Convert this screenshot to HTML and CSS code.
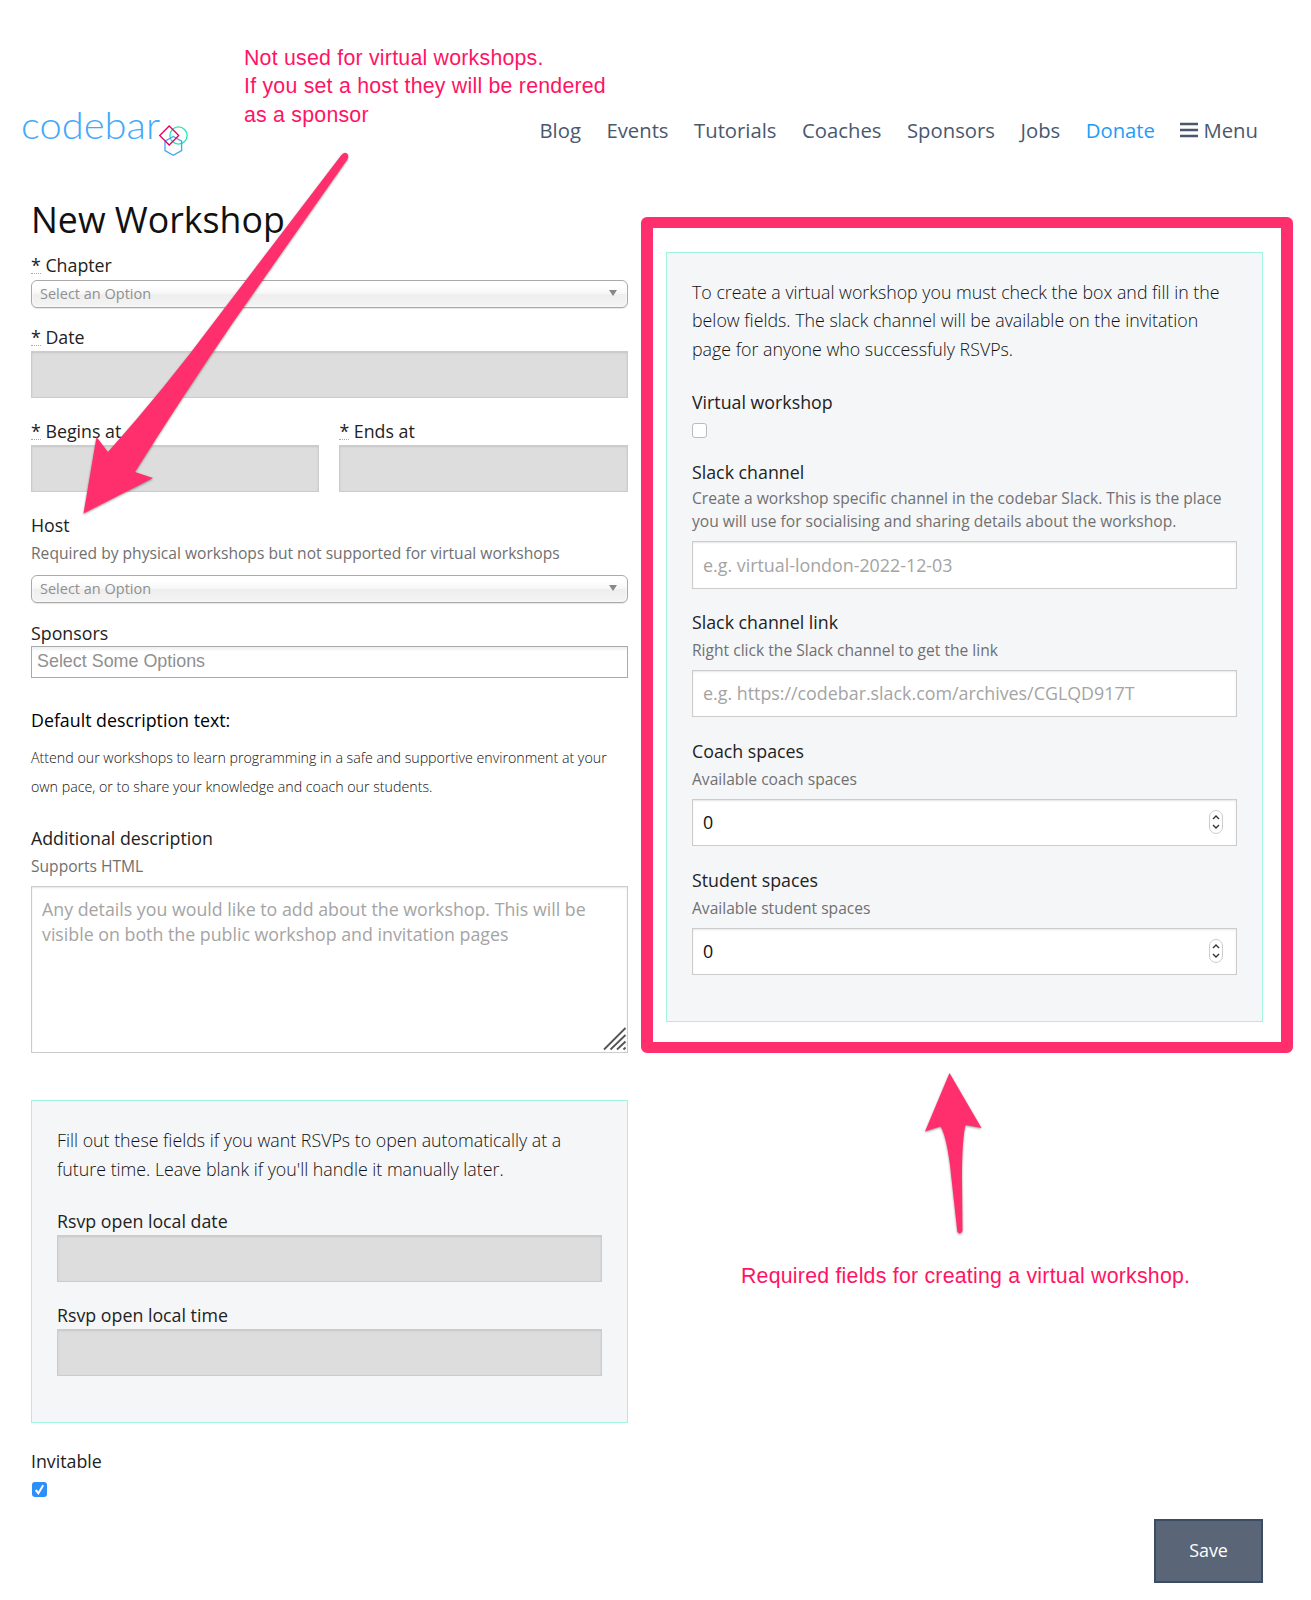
FILE: index.html
```html
<!DOCTYPE html>
<html lang="en">
<head>
<meta charset="utf-8">
<title>New Workshop</title>
<link rel="stylesheet" href="styles.css">
</head>
<body>
<header class="header">
  <a class="logo">
    <svg width="170" height="72" viewBox="0 -20 170 72">
      <text class="logo-text" x="-1" y="32.500" textLength="139" lengthAdjust="spacingAndGlyphs">codebar</text>
      <g fill="none" stroke-width="1.3">
        <circle cx="156.500" cy="29.500" r="8.600" stroke="#1de9b6"/>
        <path d="M151.300 30.500l8.300 4.700v9.400l-8.300 4.700-8.300-4.700v-9.400z" stroke="#42a5f5"/>
        <path d="M147.200 20l9.500 9.500-9.500 9.500-9.500-9.500z" stroke="#e6005c"/>
      </g>
    </svg>
  </a>
  <nav class="nav">
    <a>Blog</a><a>Events</a><a>Tutorials</a><a>Coaches</a><a>Sponsors</a><a>Jobs</a><a class="donate">Donate</a>
    <a class="menu"><svg width="18" height="16" viewBox="0 0 18 16"><path d="M0 2h18M0 8h18M0 14h18" stroke="#4a586e" stroke-width="2.700"/></svg>Menu</a>
  </nav>
</header>
<main class="columns">
  <section class="left">
    <h1>New Workshop</h1>
    <div class="field chapter">
      <label><abbr>*</abbr> Chapter</label>
      <div class="select"><span>Select an Option</span><i></i></div>
    </div>
    <div class="field date">
      <label><abbr>*</abbr> Date</label>
      <input class="input readonly" readonly>
    </div>
    <div class="times">
      <div class="field">
        <label><abbr>*</abbr> Begins at</label>
        <input class="input readonly" readonly>
      </div>
      <div class="field">
        <label><abbr>*</abbr> Ends at</label>
        <input class="input readonly" readonly>
      </div>
    </div>
    <div class="field host">
      <label>Host</label>
      <p class="hint">Required by physical workshops but not supported for virtual workshops</p>
      <div class="select"><span>Select an Option</span><i></i></div>
    </div>
    <div class="field sponsors">
      <label>Sponsors</label>
      <div class="multi">Select Some Options</div>
    </div>
    <div class="default-text">
      <h2>Default description text:</h2>
      <p>Attend our workshops to learn programming in a safe and supportive environment at your<br>own pace, or to share your knowledge and coach our students.</p>
    </div>
    <div class="field description">
      <label>Additional description</label>
      <p class="hint">Supports HTML</p>
      <div class="area-wrap">
        <textarea class="area" placeholder="Any details you would like to add about the workshop. This will be visible on both the public workshop and invitation pages"></textarea>
        <svg class="grip" width="24" height="24" viewBox="0 0 24 24"><path d="M1 22.500L22.500 1M7.500 22.500L22.500 8M14 22.500l8.500-8M20.500 22.500l2-2" stroke="#555" stroke-width="1.800"/></svg>
      </div>
    </div>
    <div class="panel rsvp">
      <p class="intro">Fill out these fields if you want RSVPs to open automatically at a<br>future time. Leave blank if you'll handle it manually later.</p>
      <div class="field">
        <label>Rsvp open local date</label>
        <input class="input readonly" readonly>
      </div>
      <div class="field">
        <label>Rsvp open local time</label>
        <input class="input readonly" readonly>
      </div>
    </div>
    <div class="field invitable">
      <label>Invitable</label>
      <span class="check checked"><svg width="15" height="15" viewBox="0 0 15 15"><path d="M3.700 8l2.700 3.200 4.800-8" fill="none" stroke="#fff" stroke-width="2"/></svg></span>
    </div>
  </section>
  <section class="right">
    <div class="panel virtual">
      <p class="intro">To create a virtual workshop you must check the box and fill in the<br>below fields. The slack channel will be available on the invitation<br>page for anyone who successfuly RSVPs.</p>
      <div class="field virtual-check">
        <label>Virtual workshop</label>
        <span class="check"></span>
      </div>
      <div class="field slack">
        <label>Slack channel</label>
        <p class="hint">Create a workshop specific channel in the codebar Slack. This is the place<br>you will use for socialising and sharing details about the workshop.</p>
        <input class="input" placeholder="e.g. virtual-london-2022-12-03">
      </div>
      <div class="field hinted">
        <label>Slack channel link</label>
        <p class="hint">Right click the Slack channel to get the link</p>
        <input class="input" placeholder="e.g. https://codebar.slack.com/archives/CGLQD917T">
      </div>
      <div class="field hinted">
        <label>Coach spaces</label>
        <p class="hint">Available coach spaces</p>
        <div class="number"><input class="input" value="0">
          <span class="spinner"><svg width="8" height="16" viewBox="0 0 8 16"><path d="M1 5l3-3 3 3M1 11l3 3 3-3" fill="none" stroke="#333" stroke-width="1.400"/></svg></span></div>
      </div>
      <div class="field hinted">
        <label>Student spaces</label>
        <p class="hint">Available student spaces</p>
        <div class="number"><input class="input" value="0">
          <span class="spinner"><svg width="8" height="16" viewBox="0 0 8 16"><path d="M1 5l3-3 3 3M1 11l3 3 3-3" fill="none" stroke="#333" stroke-width="1.400"/></svg></span></div>
      </div>
    </div>
  </section>
</main>
<footer class="actions"><button class="save">Save</button></footer>

<p class="note note-host">Not used for virtual workshops.<br>If you set a host they will be rendered<br>as a sponsor</p>
<p class="note note-virtual">Required fields for creating a virtual workshop.</p>
<div class="frame"></div>
<svg class="arrows" width="1311" height="1600" viewBox="0 0 1311 1600">
  <path d="M83.500 513.500L96.500 437 108 452Q165 388 214 322L341 155.500Q344 151.500 347 153.500 349.500 155.500 347 160L234 321Q184 394 135 472L153 478Z"/>
  <path d="M949.500 1073L981.500 1128 965.500 1125Q962 1140 962 1177L962.500 1231Q960 1235.500 957.300 1231.500L950 1165Q946 1135 940.500 1126.500L925 1131.500Z"/>
</svg>
</body>
</html>
```
FILE: styles.css
```css
* { box-sizing: border-box; }
body {
  margin: 0;
  width: 1311px;
  height: 1600px;
  position: relative;
  overflow: hidden;
  background: #fff;
  color: #222;
  font-family: "Open Sans", sans-serif;
}
h1, h2, p { margin: 0; font-weight: 400; }

.header {
  height: 194px;
  padding: 86px 53px 0 22px;
  display: flex;
  justify-content: space-between;
  align-items: flex-start;
}
.logo svg { display: block; }
.logo-text { font: 300 37.500px Lato, sans-serif; fill: #42a9fb; }
.nav {
  display: flex;
  gap: 25.500px;
  padding-top: 29px;
  font-size: 20.300px;
  line-height: 30px;
  color: #4a586e;
}
.nav .donate { color: #1e9cf8; }
.menu { display: flex; align-items: center; gap: 5px; }

.columns {
  height: 1325px;
  padding: 0 48px 0 31px;
  display: grid;
  grid-template-columns: 597px 597px;
  justify-content: space-between;
  align-items: start;
}
h1 { font-size: 35.700px; line-height: 50px; color: #111; }
label { display: block; height: 27px; font-size: 17.800px; line-height: 27px; white-space: nowrap; }
abbr { display: inline-block; height: 22px; line-height: 27px; border-bottom: 1px dotted #aaa; vertical-align: top; }
.hint { margin-top: 3px; font-size: 15.600px; line-height: 23.200px; color: #707070; white-space: nowrap; }

.chapter { margin-top: 8px; }
.chapter .select { margin-top: 1px; }
.select {
  height: 28px;
  margin-top: 2px;
  padding: 0 9px 0 8px;
  display: flex;
  align-items: center;
  justify-content: space-between;
  border: 1px solid #aaa;
  border-radius: 6px;
  background: linear-gradient(#fff 20%, #f6f6f6 50%, #eee 52%, #f4f4f4 100%);
  box-shadow: 0 0 3px #fff inset, 0 1px 1px rgba(0, 0, 0, .1);
  color: #909090;
  font-size: 14.500px;
  line-height: 26px;
}
.select span { margin-top: -1px; }
.select i { border: 4px solid transparent; border-top: 6px solid #888; border-bottom: 0; margin-top: -2px; margin-right: 1px; }

.input {
  display: block;
  width: 100%;
  height: 47px;
  padding: 0 10px;
  border: 1px solid #ccc;
  border-radius: 0;
  background: #fff;
  box-shadow: inset 0 1px 2px rgba(0, 0, 0, .1);
  font: 400 17.850px "Open Sans", sans-serif;
  color: #111;
  outline: none;
}
.input::placeholder, .area::placeholder { color: #a4a4a4; opacity: 1; }
.readonly { background: #ddd; }
.date { margin-top: 16px; }
.times { margin-top: 20px; display: grid; grid-template-columns: 288px 288px; justify-content: start; column-gap: 20.400px; }
.times .field:last-child { width: 288.600px; }
.host { margin-top: 20px; }
.host .select { margin-top: 10px; }
.sponsors { margin-top: 17px; }
.sponsors label { height: 26px; }
.multi {
  height: 32px;
  padding-left: 5px;
  border: 1px solid #aaa;
  background: linear-gradient(#eee 1%, #fff 15%);
  color: #909090;
  font: 17.900px/29px "Liberation Sans", Arial, sans-serif;
}
.default-text { margin-top: 29px; }
h2 { font-size: 17.800px; line-height: 27px; color: #000; }
.default-text p { margin-top: 10px; font-size: 14.220px; line-height: 28.400px; font-weight: 300; color: #111; white-space: nowrap; }
.description { margin-top: 24px; }
.area-wrap { position: relative; margin-top: 8px; }
.area {
  display: block;
  width: 100%;
  height: 167px;
  padding: 10px;
  border: 1px solid #ccc;
  box-shadow: inset 0 1px 2px rgba(0, 0, 0, .1);
  resize: none;
  font: 400 17.800px/25px "Open Sans", sans-serif;
}
.grip { position: absolute; right: 1px; bottom: 2px; }

.panel { border: 1px solid #9ff5dd; background: #f5f6f8; padding: 25px; }
.intro { font-size: 17.810px; line-height: 28.400px; font-weight: 300; color: #111; white-space: nowrap; }
.rsvp { height: 323px; margin-top: 47px; }
.rsvp .field { margin-top: 20px; }
.rsvp .intro + .field { margin-top: 25.200px; }
.invitable { margin-top: 25px; }
.check {
  display: block;
  width: 15px;
  height: 15px;
  margin-top: 7px;
  border: 1px solid #bbb;
  border-radius: 3px;
  background: #fff;
}
.checked { margin-left: 1px; border: 0; background: #2e8ffa; }
.checked svg { display: block; }

.virtual { height: 770px; margin-top: 58px; }
.virtual-check { margin-top: 26px; }
.slack { margin-top: 21px; }
.slack .hint { margin-top: 1px; }
.slack .input { height: 48px; margin-top: 7px; }
.hinted { height: 109px; margin-top: 20px; }
.hinted .input { margin-top: 8px; }
.number { position: relative; }
.spinner {
  position: absolute;
  top: 11px;
  right: 14px;
  width: 14px;
  height: 24px;
  display: flex;
  align-items: center;
  justify-content: center;
  border: 1px solid #ccc;
  border-radius: 7px;
  background: #fff;
}
.actions { display: flex; justify-content: flex-end; padding-right: 48px; }
.save {
  width: 109px;
  height: 64px;
  padding: 0 0 3px;
  border: 2px solid #3c4d63;
  background: #5a6678;
  color: #fff;
  font: 400 17.900px "Open Sans", sans-serif;
}

.note { position: absolute; color: #ff1464; font: 21.300px/28.400px "Liberation Sans", Helvetica, sans-serif; letter-spacing: .235px; white-space: nowrap; }
.note-host { left: 244px; top: 44px; }
.note-virtual { left: 741px; top: 1262px; }
.frame {
  position: absolute;
  left: 641px;
  top: 217px;
  width: 652px;
  height: 836px;
  border: 11px solid #ff2f6d;
  border-width: 11px 12px;
  border-radius: 6px;
}
.arrows { position: absolute; left: 0; top: 0; fill: #ff2f6d; pointer-events: none; filter: drop-shadow(0 1px 1px rgba(0, 0, 0, .4)); }
```
